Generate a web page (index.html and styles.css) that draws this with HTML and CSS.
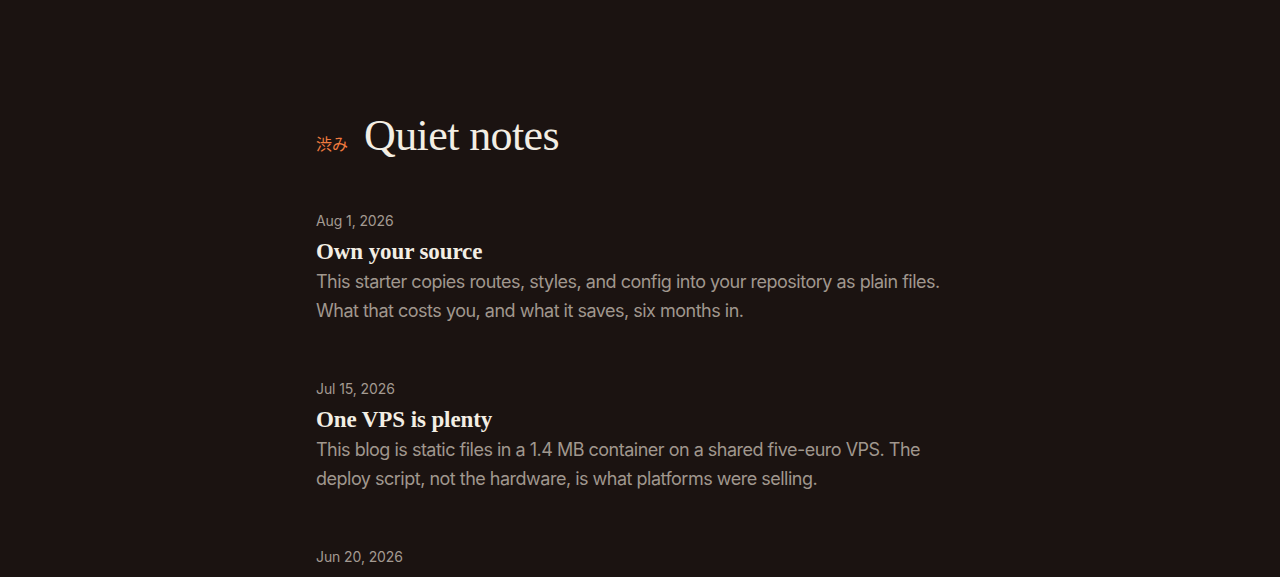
FILE: index.html
```
<!DOCTYPE html>
<html lang="en">
<head>
<meta charset="utf-8">
<title>Quiet notes</title>
<link rel="stylesheet" href="styles.css">
</head>
<body>
<main class="page">
  <header class="masthead">
    <span class="mark" lang="ja">渋み</span>
    <h1 class="site-title">Quiet notes</h1>
  </header>
  <ul class="posts">
    <li class="post">
      <time class="date">Aug 1, 2026</time>
      <h2 class="post-title">Own your source</h2>
      <p class="excerpt">This starter copies routes, styles, and config into your repository as plain files. What that costs you, and what it saves, six months in.</p>
    </li>
    <li class="post">
      <time class="date">Jul 15, 2026</time>
      <h2 class="post-title">One VPS is plenty</h2>
      <p class="excerpt">This blog is static files in a 1.4 MB container on a shared five-euro VPS. The deploy script, not the hardware, is what platforms were selling.</p>
    </li>
    <li class="post">
      <time class="date">Jun 20, 2026</time>
      <h2 class="post-title">Plain text lasts</h2>
      <p class="excerpt">Markdown in a folder outlives every editor, database, and hosted service it has ever been stored in.</p>
    </li>
  </ul>
</main>
</body>
</html>
```
FILE: styles.css
```
html, body {
  margin: 0;
  padding: 0;
  background: #1b1311;
}
body {
  font-family: Inter, "Noto Sans", sans-serif;
  color: #a39a92;
}
.page {
  width: 648px;
  margin: 0 auto;
  padding-top: 108px;
}
.masthead {
  display: flex;
  align-items: baseline;
  gap: 16px;
  margin-bottom: 47px;
}
.mark {
  font-family: "Noto Sans CJK JP", sans-serif;
  font-size: 16px;
  color: #ee7a3f;
}
.site-title {
  margin: 0;
  font-family: "Liberation Serif", serif;
  font-weight: 400;
  font-size: 44px;
  line-height: 56px;
  letter-spacing: -0.6px;
  color: #f3eee4;
}
.posts {
  list-style: none;
  margin: 0;
  padding: 0;
  display: flex;
  flex-direction: column;
  gap: 54px;
}
.post {
  display: flex;
  flex-direction: column;
}
.date {
  font-size: 14px;
  line-height: 20px;
  letter-spacing: -0.1px;
  color: #a39a92;
}
.post-title {
  margin: 6px 0 0;
  font-family: "Liberation Serif", serif;
  font-weight: 700;
  font-size: 23px;
  line-height: 30px;
  letter-spacing: -0.1px;
  color: #f3eee4;
}
.excerpt {
  margin: 0;
  font-size: 18px;
  line-height: 29px;
  letter-spacing: -0.5px;
  color: #a0978e;
}
```
